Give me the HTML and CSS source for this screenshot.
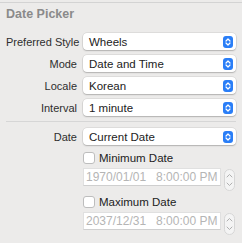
FILE: index.html
```html
<!DOCTYPE html>
<html lang="en">
<head>
  <meta charset="UTF-8">
  <title>Date Picker</title>
  <link rel="stylesheet" href="styles.css">
</head>
<body>
  <div class="panel">
    <h2 class="title">Date Picker</h2>

    <div class="form">
      <label class="label">Preferred Style</label>
      <div class="popup"><span>Wheels</span><span class="arrows"><svg width="10" height="12" viewBox="0 0 10 12"><path d="M3 5 L5 3 L7 5 M3 7 L5 9 L7 7" fill="none" stroke="#fff" stroke-width="1.2" stroke-linecap="round" stroke-linejoin="round"/></svg></span></div>

      <label class="label">Mode</label>
      <div class="popup"><span>Date and Time</span><span class="arrows"><svg width="10" height="12" viewBox="0 0 10 12"><path d="M3 5 L5 3 L7 5 M3 7 L5 9 L7 7" fill="none" stroke="#fff" stroke-width="1.2" stroke-linecap="round" stroke-linejoin="round"/></svg></span></div>

      <label class="label">Locale</label>
      <div class="popup"><span>Korean</span><span class="arrows"><svg width="10" height="12" viewBox="0 0 10 12"><path d="M3 5 L5 3 L7 5 M3 7 L5 9 L7 7" fill="none" stroke="#fff" stroke-width="1.2" stroke-linecap="round" stroke-linejoin="round"/></svg></span></div>

      <label class="label">Interval</label>
      <div class="popup"><span>1 minute</span><span class="arrows"><svg width="10" height="12" viewBox="0 0 10 12"><path d="M3 5 L5 3 L7 5 M3 7 L5 9 L7 7" fill="none" stroke="#fff" stroke-width="1.2" stroke-linecap="round" stroke-linejoin="round"/></svg></span></div>

      <div class="separator"></div>

      <label class="label">Date</label>
      <div class="popup"><span>Current Date</span><span class="arrows"><svg width="10" height="12" viewBox="0 0 10 12"><path d="M3 5 L5 3 L7 5 M3 7 L5 9 L7 7" fill="none" stroke="#fff" stroke-width="1.2" stroke-linecap="round" stroke-linejoin="round"/></svg></span></div>

      <div class="limits">
        <div class="check-row"><span class="checkbox"></span><span>Minimum Date</span></div>
        <div class="date-row">
          <div class="date-field"><span>1970/01/01</span><span>8:00:00 PM</span></div>
          <span class="stepper"><svg width="11" height="22" viewBox="0 0 11 22"><rect x="0.5" y="0.5" width="10" height="21" rx="5" fill="#f4f4f4" stroke="#d6d6d6"/><path d="M3 8 L5.5 5.5 L8 8 M3 14 L5.5 16.5 L8 14" fill="none" stroke="#b0b0b0" stroke-width="1" stroke-linecap="round" stroke-linejoin="round"/></svg></span>
        </div>

        <div class="check-row second"><span class="checkbox"></span><span>Maximum Date</span></div>
        <div class="date-row">
          <div class="date-field"><span>2037/12/31</span><span>8:00:00 PM</span></div>
          <span class="stepper"><svg width="11" height="22" viewBox="0 0 11 22"><rect x="0.5" y="0.5" width="10" height="21" rx="5" fill="#f4f4f4" stroke="#d6d6d6"/><path d="M3 8 L5.5 5.5 L8 8 M3 14 L5.5 16.5 L8 14" fill="none" stroke="#b0b0b0" stroke-width="1" stroke-linecap="round" stroke-linejoin="round"/></svg></span>
        </div>
      </div>
    </div>
  </div>
</body>
</html>
```

FILE: styles.css
```css
* {
  box-sizing: border-box;
  margin: 0;
  padding: 0;
}

body {
  font-family: 'Liberation Sans', Arial, sans-serif;
  background: #ecebea;
  color: #262626;
  padding-top: 2px;
}

.panel {
  border-top: 1px solid #d3d3d3;
  padding: 4px 6px 0;
}

.title {
  font-size: 12.5px;
  line-height: 15px;
  font-weight: bold;
  color: #8a8a8a;
}

.form {
  display: grid;
  grid-template-columns: 71px 1fr;
  column-gap: 6px;
  row-gap: 5px;
  align-items: center;
  margin-top: 11px;
}

.label {
  font-size: 11px;
  text-align: right;
  color: #2e2e2e;
  white-space: nowrap;
}

.popup {
  height: 17px;
  background: #fff;
  border-radius: 4px;
  box-shadow: 0 0 0 0.5px rgba(0, 0, 0, 0.12), 0 1px 1.5px rgba(0, 0, 0, 0.2);
  display: flex;
  align-items: center;
  justify-content: space-between;
  padding: 0 3px 0 6px;
  font-size: 11.5px;
  color: #222;
}

.arrows {
  width: 10px;
  height: 12px;
  background: #2a7ef7;
  border-radius: 3px;
  display: flex;
}

.separator {
  grid-column: 1 / 3;
  height: 1px;
  background: #d6d6d6;
  margin-bottom: 1px;
}

.limits {
  grid-column: 2;
  display: flex;
  flex-direction: column;
}

.check-row {
  height: 15px;
  display: flex;
  align-items: center;
  gap: 4px;
  font-size: 11.5px;
  color: #222;
}

.check-row.second {
  margin-top: 3px;
}

.checkbox {
  width: 12px;
  height: 12px;
  background: #fff;
  border: 1px solid #bdbdbd;
  border-radius: 3px;
}

.date-row {
  display: flex;
  align-items: flex-start;
  gap: 3px;
  margin-top: 3px;
}

.date-field {
  width: 138px;
  height: 18px;
  background: #fff;
  border: 1px solid #e0e0e0;
  border-bottom-color: #cfcfcf;
  display: flex;
  align-items: center;
  gap: 10px;
  padding-left: 2px;
  font-size: 12px;
  color: #b5b5b5;
  white-space: nowrap;
}

.stepper {
  display: flex;
  margin-top: 1px;
}
```
